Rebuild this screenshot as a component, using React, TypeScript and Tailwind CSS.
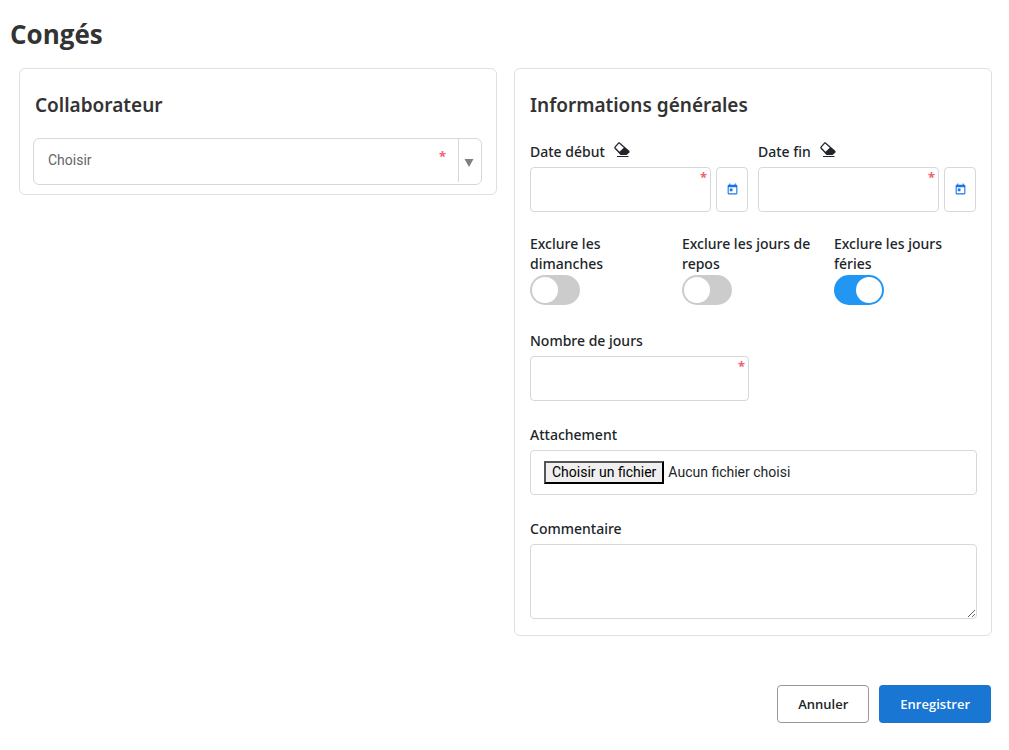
import { useRef, useState } from "react";
import type { ReactNode } from "react";
import { MdToday } from "react-icons/md";

const fieldClass = "border border-[#d8d8d8] rounded bg-white outline-none";

export default function CongesPage() {
  return (
    <div className="bg-white pt-4 pb-7 font-['Noto_Sans',sans-serif] text-[#212529]">
      <h1 className="pl-[10px] mb-4 text-[26px] leading-9 font-bold font-['Open_Sans',sans-serif] text-[#333]">
        Congés
      </h1>
      <form onSubmit={(e) => e.preventDefault()} className="pl-[19px] pr-[17px]">
        <div className="grid grid-cols-2 items-start gap-[17px]">
          <CollaborateurCard />
          <InformationsCard />
        </div>

        <div className="flex justify-end gap-[10px] mt-[49px] pr-px text-[13px] font-semibold font-['Open_Sans',sans-serif]">
          <button type="button" className="h-[38px] px-5 pt-px border border-[#999] rounded text-[#212529]">
            Annuler
          </button>
          <button type="submit" className="h-[38px] px-[21px] pt-px rounded bg-[#1976d2] text-white">
            Enregistrer
          </button>
        </div>
      </form>
    </div>
  );
}

/* ===================== Collaborateur ===================== */
function CollaborateurCard() {
  return (
    <section className="border border-[#e0e0e0] rounded-md pl-[13px] pr-[14px] pt-6 pb-[9px]">
      <h2 className="pl-[2px] mb-5 text-[19px] leading-[25px] font-semibold text-[#333]">Collaborateur</h2>
      <div className="relative">
        <select
          aria-label="Collaborateur"
          required
          defaultValue=""
          className="appearance-none w-full h-[47px] pl-[14px] pr-12 pb-1 border border-[#d8d8d8] rounded-md bg-white font-[Roboto,sans-serif] text-sm text-[#666] outline-none"
        >
          <option value="">Choisir</option>
        </select>
        <Required className="top-2 right-9" />
        <span className="pointer-events-none absolute top-px right-0 w-6 h-[43px] border-l border-[#d8d8d8]">
          <svg viewBox="0 0 10 8" className="absolute top-5 left-[5px] w-[10px] h-2" fill="#808080">
            <path d="M0.5 0h9L5 8z" />
          </svg>
        </span>
      </div>
    </section>
  );
}

/* ===================== Informations générales ===================== */
function InformationsCard() {
  return (
    <section className="border border-[#e0e0e0] rounded-md pl-[15px] pr-[14px] pt-6 pb-4 text-sm leading-5 font-medium">
      <h2 className="mb-6 text-[19px] leading-[25px] font-semibold text-[#333]">Informations générales</h2>

      <div className="grid grid-cols-2 gap-[10px] pr-px">
        <DateField id="debut" label="Date début" />
        <DateField id="fin" label="Date fin" />
      </div>

      <div className="grid grid-cols-3 gap-[10px] mt-[22px] pr-px">
        <Toggle label="Exclure les dimanches" />
        <Toggle label="Exclure les jours de repos" />
        <Toggle label="Exclure les jours féries" initial />
      </div>

      <div className="mt-[26px] w-[49%]">
        <label htmlFor="nombre" className="block mb-[5px]">Nombre de jours</label>
        <div className="relative">
          <input id="nombre" type="text" required className={`${fieldClass} block w-full h-[45px] px-3`} />
          <Required className="top-0 right-1" />
        </div>
      </div>

      <FileField />

      <div className="mt-6">
        <label htmlFor="commentaire" className="block mb-[5px]">Commentaire</label>
        <textarea id="commentaire" className={`${fieldClass} block w-full h-[75px] p-3 resize`} />
      </div>
    </section>
  );
}

function DateField({ id, label }: { id: string; label: string }) {
  const [value, setValue] = useState("");

  return (
    <div>
      <div className="flex items-center mb-[5px] h-5">
        <label htmlFor={id}>{label}</label>
        <button
          type="button"
          aria-label={`Effacer ${label}`}
          onClick={() => setValue("")}
          className="ml-[9px] pb-1"
        >
          <EraserIcon />
        </button>
      </div>
      <div className="flex gap-[5px]">
        <div className="relative flex-1">
          <input
            id={id}
            type="text"
            required
            value={value}
            onChange={(e) => setValue(e.target.value)}
            className={`${fieldClass} block w-full h-[45px] px-3`}
          />
          <Required className="top-0 right-1" />
        </div>
        <button
          type="button"
          aria-label={`Calendrier ${label}`}
          className={`${fieldClass} flex items-center justify-center w-8 h-[45px] text-[#1a73e8]`}
        >
          <MdToday size={13} />
        </button>
      </div>
    </div>
  );
}

function Toggle({ label, initial = false }: { label: string; initial?: boolean }) {
  return (
    <label className="block">
      <span className="block mb-px">{label}</span>
      <input type="checkbox" defaultChecked={initial} className="peer sr-only" />
      <span className="block w-[50px] h-[30px] p-[2px] rounded-full bg-[#ccc] peer-checked:bg-[#2196f3] peer-checked:pl-[22px]">
        <span className="block size-[26px] rounded-full bg-white" />
      </span>
    </label>
  );
}

function FileField() {
  const inputRef = useRef<HTMLInputElement>(null);
  const [fileName, setFileName] = useState("");

  return (
    <div className="mt-6">
      <label htmlFor="attachement" className="block mb-[5px]">Attachement</label>
      <div className={`${fieldClass} flex items-center h-[45px] px-[13px] font-[Roboto,sans-serif] font-normal`}>
        <input
          ref={inputRef}
          id="attachement"
          type="file"
          className="hidden"
          onChange={(e) => setFileName(e.target.files?.[0]?.name ?? "")}
        />
        <button
          type="button"
          onClick={() => inputRef.current?.click()}
          className="h-[23px] px-[6px] pb-[2px] border-2 border-t-[#555] border-l-[#555] border-r-black border-b-black bg-[#efefef] leading-4 text-black"
        >
          Choisir un fichier
        </button>
        <span className="ml-1 pb-[2px]">{fileName || "Aucun fichier choisi"}</span>
      </div>
    </div>
  );
}

function Required({ className }: { className: string }): ReactNode {
  return (
    <span className={`pointer-events-none absolute text-[13px] leading-5 font-bold text-[#f4606c] ${className}`}>
      *
    </span>
  );
}

function EraserIcon() {
  return (
    <svg viewBox="0 0 16 16" className="block size-4" fill="#212529">
      <path
        fillRule="evenodd"
        d="M5.500 .3 15.500 9v1.500L12.500 13H6.500L.3 6.200V5L4.500 .3zM5 1.500 1.500 5.500l4 4.300L9.800 5.700z"
      />
      <path d="M3 14h11.500v1H3z" />
    </svg>
  );
}
